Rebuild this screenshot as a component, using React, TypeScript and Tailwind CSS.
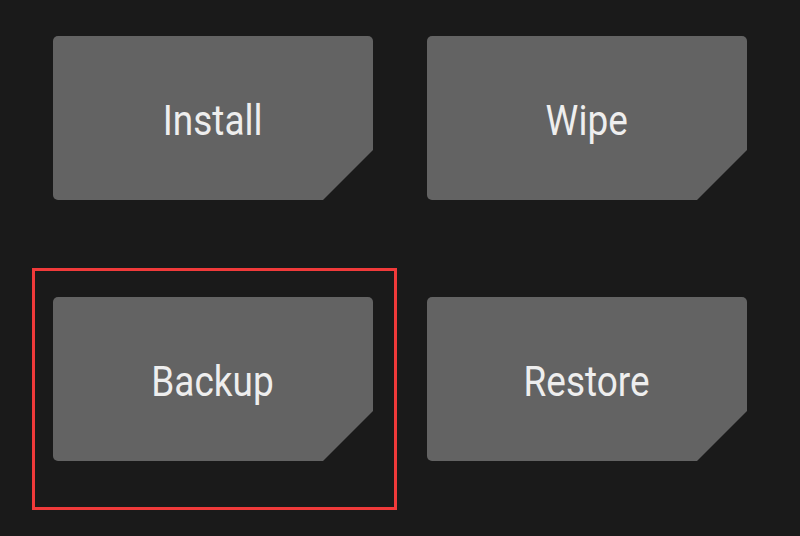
import React from "react";

const tiles = ["Install", "Wipe", "Backup", "Restore"];

function Tile({ label }: { label: string }) {
  return (
    <div className="flex h-[164px] w-[320px] items-center justify-center rounded-[5px] bg-[#636363] pt-[6px] [clip-path:polygon(0_0,100%_0,100%_calc(100%-50px),calc(100%-50px)_100%,0_100%)]">
      <span
        className="inline-block origin-center scale-x-[0.88] text-[42px] leading-none text-[#eeeeee]"
        style={{ fontFamily: "Roboto, 'Noto Sans', sans-serif" }}
      >
        {label}
      </span>
    </div>
  );
}

export default function App() {
  return (
    <div className="h-[536px] w-[800px] overflow-hidden bg-[#1a1a1a]">
      <div className="grid grid-cols-[320px_320px] gap-x-[54px] gap-y-[97px] pl-[53px] pt-[36px]">
        {tiles.map((t) => (
          <div key={t} className="relative">
            {t === "Backup" && (
              <div className="pointer-events-none absolute left-[-21px] top-[-29px] h-[242px] w-[365px] border-[3px] border-[#f03a3a]" />
            )}
            <Tile label={t} />
          </div>
        ))}
      </div>
    </div>
  );
}
